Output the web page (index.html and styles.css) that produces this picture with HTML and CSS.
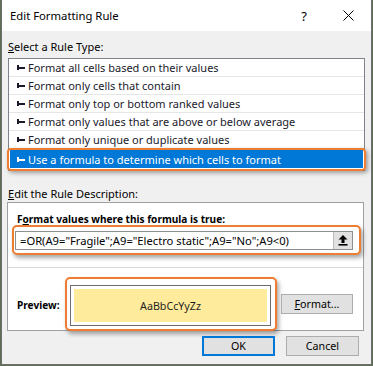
FILE: index.html
```html
<!DOCTYPE html>
<html>

<head>
    <meta charset="utf-8" />
    <title>Edit Formatting Rule</title>
    <link rel="stylesheet" href="styles.css">
</head>

<body>
    <div class="dialog">
        <div class="titlebar">
            <span class="title">Edit Formatting Rule</span>
            <span class="help">?</span>
            <span class="close">
                <svg width="11" height="11" viewBox="0 0 11 11">
                    <path d="M0.5 0.5 L10.5 10.5 M10.5 0.5 L0.5 10.5" stroke="#000" stroke-width="1" fill="none" />
                </svg>
            </span>
        </div>

        <div class="content">
            <div class="section-label"><u>S</u>elect a Rule Type:</div>
            <ul class="rule-list">
                <li><span class="bullet"></span>Format all cells based on their values</li>
                <li><span class="bullet"></span>Format only cells that contain</li>
                <li><span class="bullet"></span>Format only top or bottom ranked values</li>
                <li><span class="bullet"></span>Format only values that are above or below average</li>
                <li><span class="bullet"></span>Format only unique or duplicate values</li>
                <li class="selected"><span class="bullet"></span>Use a formula to determine which cells to format</li>
            </ul>

            <div class="section-label desc-label"><u>E</u>dit the Rule Description:</div>
            <div class="desc">
                <div class="desc-top">
                    <div class="bold-label">F<u>o</u>rmat values where this formula is true:</div>
                    <div class="mark formula-mark">
                        <div class="formula">
                            <span class="formula-text">=OR(A9="Fragile";A9="Electro static";A9="No";A9&lt;0)</span>
                            <span class="collapse-btn">
                                <svg width="10" height="11" viewBox="0 0 10 11">
                                    <path d="M5 0 L9.5 4.5 H6.5 V8 H3.5 V4.5 H0.5 Z" fill="#000" />
                                    <rect x="0.5" y="9" width="9" height="1.6" fill="#000" />
                                </svg>
                            </span>
                        </div>
                    </div>
                </div>
                <div class="desc-preview">
                    <span class="bold-label preview-label">Preview:</span>
                    <div class="mark preview-mark">
                        <div class="preview-frame">
                            <div class="preview-fill">AaBbCcYyZz</div>
                        </div>
                    </div>
                    <button class="btn format-btn"><u>F</u>ormat...</button>
                </div>
            </div>

            <div class="actions">
                <button class="btn ok-btn">OK</button>
                <button class="btn">Cancel</button>
            </div>
        </div>
    </div>
</body>

</html>
```

FILE: styles.css
```css
* {
    box-sizing: border-box;
}

body {
    margin: 0;
    background-color: #5f6f55;
    font-family: 'Noto Sans', 'Segoe UI', sans-serif;
    font-size: 11px;
    color: #000;
}

.dialog {
    width: 371px;
    height: 365px;
    margin-left: 1px;
    background-color: #f0f0f0;
    border: 1px solid #6e6e6e;
    border-top: none;
}

.titlebar {
    height: 31px;
    background-color: white;
    display: flex;
    align-items: center;
    padding-left: 8px;
}

.title {
    flex: 1;
    font-size: 11.3px;
}

.help {
    width: 42px;
    text-align: center;
    font-size: 13px;
}

.close {
    width: 46px;
    display: flex;
    justify-content: center;
}

.content {
    padding: 8px 6px 0 6px;
}

.section-label {
    line-height: 16px;
    margin-bottom: 3px;
}

.desc-label {
    margin-top: 15px;
    margin-bottom: 0;
}

.rule-list {
    list-style: none;
    margin: 0;
    padding: 0 0 2px 0;
    background-color: white;
    border: 1px solid #7f848c;
}

.rule-list li {
    height: 18px;
    display: flex;
    align-items: center;
    padding-left: 8px;
    border-bottom: 1px solid #e6e6e6;
    font-size: 11px;
    color: #1a1a2a;
}

.bullet {
    width: 8px;
    height: 5px;
    margin-right: 3px;
    background:
        linear-gradient(currentColor, currentColor) 0 0 / 2px 5px no-repeat,
        linear-gradient(currentColor, currentColor) 0 2px / 8px 2px no-repeat;
}

.rule-list li.selected {
    position: relative;
    margin: 1px 1px 0 1px;
    padding-left: 7px;
    border-bottom: none;
    background-color: #0078d7;
    color: white;
}

.rule-list li.selected::after {
    content: "";
    position: absolute;
    top: -2px;
    left: -3px;
    right: -3px;
    bottom: -3px;
    border: 2px solid #ed7d31;
    border-radius: 4px;
    box-shadow: 2px 2px 4px rgba(0, 0, 0, 0.35);
}

.desc {
    width: 357px;
    margin-left: -1px;
    background-color: white;
    border: 1px solid #a0a0a0;
}

.desc-top {
    padding: 8px 9px 12px 9px;
    border-bottom: 1px solid #dadada;
}

.bold-label {
    font-weight: bold;
    font-size: 10.1px;
    line-height: 16px;
}

.mark {
    border: 2px solid #ed7d31;
    border-radius: 5px;
    background-color: white;
    box-shadow: 2px 3px 4px rgba(0, 0, 0, 0.35);
}

.formula-mark {
    width: 349px;
    margin: -2px 0 0 -5px;
    padding: 4px 6px 3px 1px;
}

.formula {
    height: 19px;
    display: flex;
    align-items: center;
    border: 1px solid #8e8f8f;
    padding-left: 4px;
}

.formula-text {
    flex: 1;
    font-size: 11.2px;
    white-space: nowrap;
}

.collapse-btn {
    width: 19px;
    height: 17px;
    display: flex;
    align-items: center;
    justify-content: center;
    background-color: #e1e1e1;
    border-left: 1px solid #b9b9b9;
}

.desc-preview {
    height: 62px;
    display: flex;
    align-items: flex-start;
    padding-left: 9px;
}

.preview-label {
    width: 48px;
    margin-top: 29px;
}

.preview-mark {
    width: 212px;
    height: 54px;
    margin-top: 9px;
    padding: 6px 4px 3px 3px;
}

.preview-frame {
    height: 41px;
    border: 1px solid #6d6d6d;
    padding: 3px;
}

.preview-fill {
    height: 100%;
    display: flex;
    align-items: center;
    justify-content: center;
    background-color: #ffeb9c;
    font-size: 10.7px;
    color: #1f1f1f;
}

.btn {
    height: 20px;
    padding: 0;
    background-color: #e1e1e1;
    border: 1px solid #adadad;
    font-family: inherit;
    font-size: 10.7px;
    color: #000;
}

.format-btn {
    width: 72px;
    margin: 26px 0 0 4px;
}

.actions {
    display: flex;
    justify-content: flex-end;
    gap: 11px;
    margin-top: 5px;
    padding-right: 6px;
}

.actions .btn {
    width: 73px;
}

.ok-btn {
    border: 2px solid #0078d7;
}
```
